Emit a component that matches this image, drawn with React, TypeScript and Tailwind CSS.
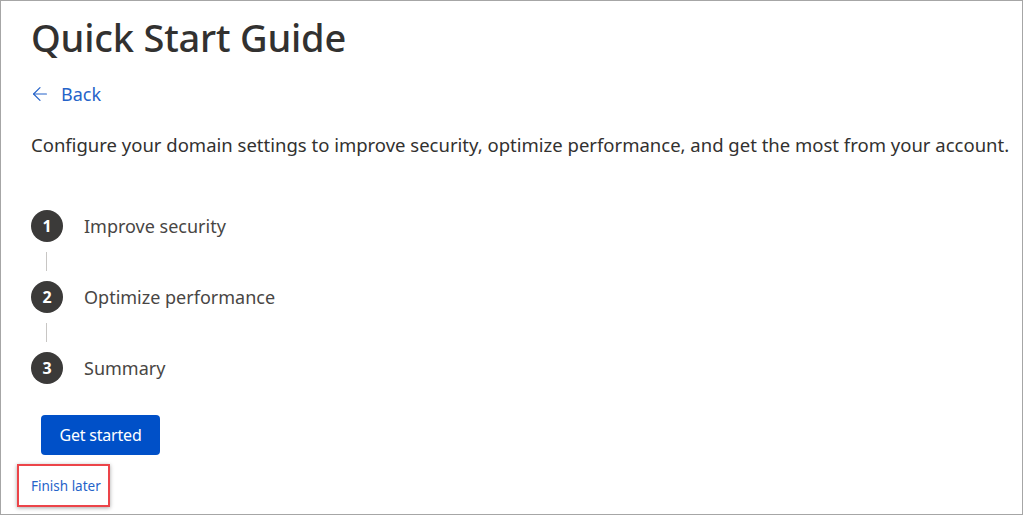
import React from "react";
import { ArrowLeft } from "lucide-react";

const steps = ["Improve security", "Optimize performance", "Summary"];

const App: React.FC = () => {
  return (
    <div className="w-[1024px] h-[516px] bg-white font-['Noto_Sans',sans-serif]">
      <div className="w-[1023px] h-[515px] border border-[#a6a6a6] pl-[30px] pt-[12px] text-[#323130] overflow-hidden">
        <h1 className="text-[38px] leading-[48px] font-medium tracking-[-0.2px]">
          Quick Start Guide
        </h1>

        <a
          href="#"
          className="mt-[19px] flex items-center text-[#2563c9] text-[18px] leading-[28px]"
        >
          <ArrowLeft className="w-[22px] h-[22px] ml-[-2px] mr-[10px]" strokeWidth={1.3} />
          Back
        </a>

        <p className="mt-[23px] text-[18.5px] leading-[28px] text-[#323130] whitespace-nowrap">
          Configure your domain settings to improve security, optimize performance, and get the most from your account.
        </p>

        <div className="mt-[51px] flex flex-col">
          {steps.map((label, i) => (
            <div key={label} className="flex flex-col">
              {i > 0 && (
                <div className="ml-[15px] w-px h-[19px] my-[10px] bg-[#c8c6c4]" />
              )}
              <div className="flex items-center">
                <div className="w-[32px] h-[32px] rounded-full bg-[#3b3a39] text-white text-[16px] font-bold flex items-center justify-center">
                  {i + 1}
                </div>
                <span className="ml-[21px] text-[18px] text-[#484644]">{label}</span>
              </div>
            </div>
          ))}
        </div>

        <button className="mt-[31px] ml-[10px] w-[119px] h-[40px] rounded-[4px] bg-[#0050c8] text-white text-[16px] tracking-[-0.2px]">
          Get started
        </button>

        <div className="mt-[9px] ml-[-14px]">
          <span className="inline-block border-2 border-[#ec4449] shadow-[0_1px_4px_rgba(0,0,0,0.35)] pl-[12px] pr-[7px] py-[9px] leading-[20px]">
            <a href="#" className="text-[13.5px] text-[#2563c9]">
              Finish later
            </a>
          </span>
        </div>
      </div>
    </div>
  );
};

export default App;
